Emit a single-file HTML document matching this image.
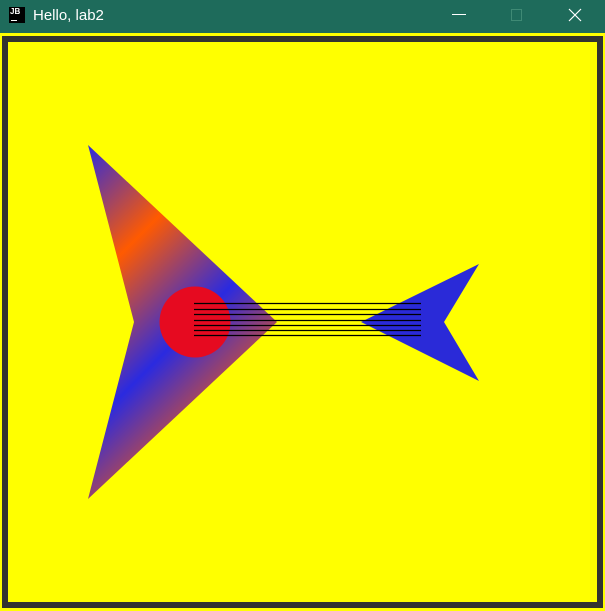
<!DOCTYPE html>
<html><head><style>
html,body{margin:0;padding:0;width:605px;height:611px;overflow:hidden;background:#ffff00;}
.tb{position:absolute;left:0;top:0;width:605px;height:33px;background:#1e6b5b;color:#fff;font-family:"Liberation Sans",sans-serif;font-size:15px;}
.logo{position:absolute;left:9px;top:7px;width:16px;height:16px;background:#000;color:#fff;font-size:8px;font-weight:bold;line-height:9px;padding-left:1px;box-sizing:border-box;}
.logo i{position:absolute;left:2px;bottom:2px;width:6px;height:1px;background:#fff;}
.title{position:absolute;left:33px;top:7px;}
.frame{position:absolute;left:2px;top:36px;width:601px;height:572px;box-sizing:border-box;border:6px solid #333330;}
</style></head><body>
<div class="tb"><div class="logo">JB<i></i></div><div class="title">Hello, lab2</div>
<svg style="position:absolute;left:440px;top:0" width="165" height="33">
<line x1="12" y1="14.5" x2="26" y2="14.5" stroke="#fff" stroke-width="1"/>
<rect x="71.5" y="9.5" width="10" height="11" fill="none" stroke="#3f8a75" stroke-width="1"/>
<path d="M129 9 L141 21 M141 9 L129 21" stroke="#fff" stroke-width="1.2"/>
</svg></div>
<div class="frame"></div>
<svg style="position:absolute;left:0;top:0" width="605" height="611">
<defs><linearGradient id="g" gradientUnits="userSpaceOnUse" x1="116.5" y1="116.5" x2="187.5" y2="187.5" spreadMethod="reflect">
<stop offset="0" stop-color="#2a2ae0"/><stop offset="1" stop-color="#ff5a00"/></linearGradient></defs>
<polygon points="88,145 277,322 88,499 134,322" fill="url(#g)"/>
<polygon points="479,264 444,322 479,381 361,322" fill="#2a2ad8"/>
<circle cx="195" cy="322" r="35.5" fill="#e60a20"/>
<g stroke="#000" stroke-width="1.3">
<line x1="194" y1="303.5" x2="421" y2="303.5"/>
<line x1="194" y1="309.5" x2="421" y2="309.5"/>
<line x1="194" y1="314.5" x2="421" y2="314.5"/>
<line x1="194" y1="320.5" x2="421" y2="320.5"/>
<line x1="194" y1="325.5" x2="421" y2="325.5"/>
<line x1="194" y1="330.5" x2="421" y2="330.5"/>
<line x1="194" y1="335.5" x2="421" y2="335.5"/>
</g></svg>
</body></html>
